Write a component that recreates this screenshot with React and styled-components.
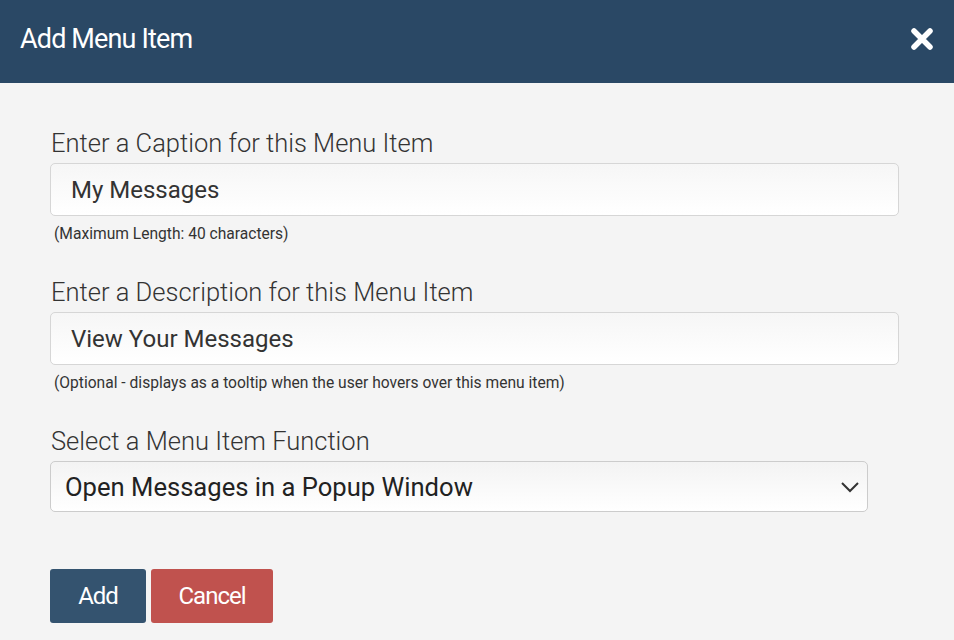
import React from "react";
import styled, { createGlobalStyle } from "styled-components";

const Global = createGlobalStyle`
  html, body { margin: 0; padding: 0; background: #f4f4f4; }
  body { font-family: Roboto, "Liberation Sans", sans-serif; }
`;

const Dialog = styled.div`
  width: 954px;
  height: 640px;
  background: #f4f4f4;
  display: flex;
  flex-direction: column;
  overflow: hidden;
`;

const Header = styled.div`
  flex-shrink: 0;
  height: 83px;
  background: #2a4865;
  display: flex;
  align-items: center;
  justify-content: space-between;
  padding: 0 20px 6px 20px;
  box-sizing: border-box;
`;

const Title = styled.h1`
  margin: 0;
  color: #fff;
  font-family: Roboto, sans-serif;
  font-weight: 400;
  font-size: 27px;
  letter-spacing: -0.85px;
`;

const Close = styled.button`
  background: none;
  border: 0;
  padding: 0;
  width: 24px;
  height: 24px;
  cursor: pointer;
  display: flex;
`;

const Body = styled.div`
  padding: 46px 54px 0 50px;
  display: flex;
  flex-direction: column;
`;

const Field = styled.div`
  display: flex;
  flex-direction: column;
  margin-bottom: ${(p) => p.$mb || 0}px;
`;

const Label = styled.label`
  font-weight: 300;
  font-size: 25.5px;
  color: #333;
  margin: 0 0 6px 1px;
  line-height: 28px;
`;

const Input = styled.input`
  box-sizing: border-box;
  width: 849px;
  height: 53px;
  border: 1px solid #d6d6d6;
  border-radius: 5px;
  background: linear-gradient(to bottom, #f6f6f6, #ffffff);
  padding: 0 20px;
  font-family: Roboto, sans-serif;
  font-size: 24px;
  color: #333;
  outline: none;
`;

const Help = styled.div`
  font-size: 15.6px;
  color: #333;
  margin: 9px 0 0 4px;
  line-height: 18px;
`;

const SelectWrap = styled.div`
  box-sizing: border-box;
  width: 818px;
  height: 51px;
  border: 1px solid #cccccc;
  border-radius: 5px;
  background: linear-gradient(to bottom, #f3f3f3, #ffffff);
  display: flex;
  align-items: center;
  justify-content: space-between;
  padding: 0 7px 0 14px;
  font-size: 25.6px;
  color: #222;
`;

const Buttons = styled.div`
  display: flex;
  gap: 5px;
  margin-top: 57px;
`;

const Button = styled.button`
  height: 54px;
  width: ${(p) => p.$w}px;
  padding: 0;
  border: 0;
  border-radius: 3px;
  background: ${(p) => p.$bg};
  color: #fff;
  font-family: Roboto, sans-serif;
  font-size: 24px;
  letter-spacing: -1px;
  cursor: pointer;
`;

export default function App() {
  return (
    <Dialog>
      <Global />
      <Header>
        <Title>Add Menu Item</Title>
        <Close aria-label="Close">
          <svg width="24" height="24" viewBox="0 0 24 24">
            <path d="M4 4 L20 20 M20 4 L4 20" stroke="#fff" strokeWidth="5.5" strokeLinecap="round" />
          </svg>
        </Close>
      </Header>
      <Body>
        <Field $mb={35}>
          <Label>Enter a Caption for this Menu Item</Label>
          <Input defaultValue="My Messages" />
          <Help>(Maximum Length: 40 characters)</Help>
        </Field>
        <Field $mb={35}>
          <Label>Enter a Description for this Menu Item</Label>
          <Input defaultValue="View Your Messages" />
          <Help>(Optional - displays as a tooltip when the user hovers over this menu item)</Help>
        </Field>
        <Field>
          <Label>Select a Menu Item Function</Label>
          <SelectWrap>
            <span>Open Messages in a Popup Window</span>
            <svg width="20" height="12" viewBox="0 0 20 12">
              <path d="M2 2 L10 10 L18 2" fill="none" stroke="#333" strokeWidth="2" />
            </svg>
          </SelectWrap>
        </Field>
        <Buttons>
          <Button $bg="#34536f" $w={96}>Add</Button>
          <Button $bg="#c0524e" $w={122}>Cancel</Button>
        </Buttons>
      </Body>
    </Dialog>
  );
}
